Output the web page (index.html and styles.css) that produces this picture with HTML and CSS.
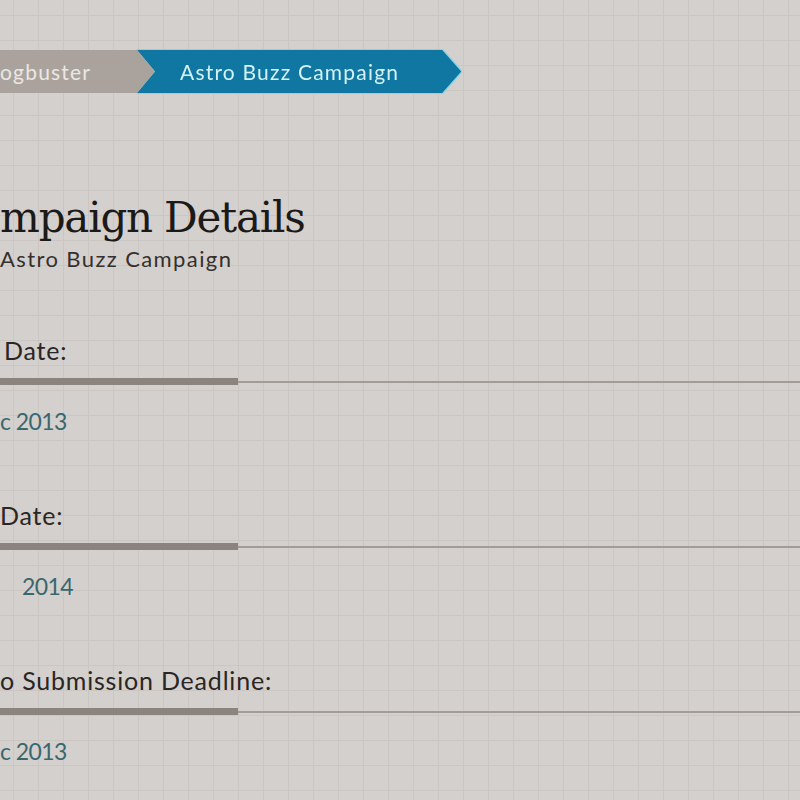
FILE: index.html
```html
<!DOCTYPE html>
<html lang="en">

<head>
    <meta charset="UTF-8">
    <meta name="viewport" content="width=device-width, initial-scale=1.0">
    <title>Campaign Details</title>
    <link rel="stylesheet" href="styles.css">
</head>

<body>

    <nav class="crumbs">
        <a class="crumb crumb-parent" href="#">ogbuster</a>
        <span class="crumb-outline">
            <a class="crumb crumb-current" href="#">Astro Buzz Campaign</a>
        </span>
    </nav>

    <div class="details">
        <h1>mpaign Details</h1>
        <p class="subtitle">Astro Buzz Campaign</p>

        <div class="field">
            <h3 class="field-label indent">Date:</h3>
            <div class="field-rule"></div>
            <p class="field-value">c 2013</p>
        </div>

        <div class="field">
            <h3 class="field-label">Date:</h3>
            <div class="field-rule"></div>
            <p class="field-value indent-value">2014</p>
        </div>

        <div class="field">
            <h3 class="field-label">o Submission Deadline:</h3>
            <div class="field-rule"></div>
            <p class="field-value">c 2013</p>
        </div>
    </div>

</body>

</html>
```

FILE: styles.css
```css
body {
    margin: 0;
    padding: 0;
    overflow: hidden;
    font-family: Lato, "Open Sans", sans-serif;
    background-color: #d4d0cd;
    background-image:
        linear-gradient(to right, #cbc6c2 1px, transparent 1px),
        linear-gradient(to bottom, #cbc6c2 1px, transparent 1px);
    background-size: 25px 25px;
    background-position: 13px 15px;
}

/* breadcrumb */
.crumbs {
    display: flex;
    margin-top: 50px;
    height: 43px;
}

.crumb {
    display: flex;
    align-items: center;
    height: 43px;
    box-sizing: border-box;
    text-decoration: none;
    font-size: 21px;
    letter-spacing: 1.2px;
}

.crumb-parent {
    position: relative;
    z-index: 1;
    width: 155px;
    padding-left: 0;
    background-color: #aaa39d;
    color: #ebe7e3;
    clip-path: polygon(0 0, 137px 0, 100% 50%, 137px 100%, 0 100%);
}

.crumb-outline {
    display: block;
    margin-left: -18px;
    filter: drop-shadow(1px 0 0 #8ad5e5) drop-shadow(-1px 0 0 #8ad5e5) drop-shadow(0 1px 0 #8ad5e5) drop-shadow(0 -1px 0 #8ad5e5);
}

.crumb-current {
    padding: 0 62px 0 43px;
    background-color: #0f77a1;
    color: #d4f1f7;
    clip-path: polygon(0 0, calc(100% - 19px) 0, 100% 50%, calc(100% - 19px) 100%, 0 100%, 18px 50%);
}

/* details */
.details {
    padding-top: 101px;
}

h1 {
    margin: 0;
    font-family: "DejaVu Serif", Georgia, serif;
    font-weight: normal;
    font-size: 42px;
    line-height: 48px;
    letter-spacing: -1.2px;
    color: #1c1a18;
}

.subtitle {
    margin: 4px 0 0 0;
    font-size: 22px;
    line-height: 26px;
    letter-spacing: 1.4px;
    color: #35302c;
}

.field {
    margin-top: 63px;
}

.field + .field {
    margin-top: 66px;
}

.field-label {
    margin: 0;
    font-size: 25px;
    font-weight: normal;
    line-height: 30px;
    letter-spacing: 0.8px;
    color: #2a2624;
}

.indent {
    padding-left: 4px;
}

.field-rule {
    position: relative;
    margin-top: 16px;
    height: 2px;
    background-color: #a39b96;
}

.field-rule::before {
    content: "";
    position: absolute;
    left: 0;
    top: -3px;
    width: 238px;
    height: 7px;
    background-color: #8b837d;
}

.field-value {
    margin: 25px 0 0 0;
    font-size: 23px;
    line-height: 26px;
    letter-spacing: -0.6px;
    color: #3a676f;
}

.indent-value {
    padding-left: 22px;
}
```
